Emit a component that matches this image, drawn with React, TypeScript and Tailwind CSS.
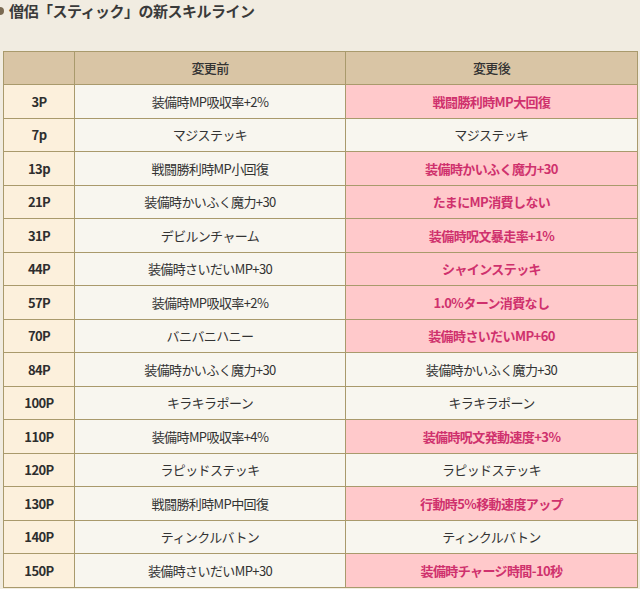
import React from 'react';

interface SkillRow {
    pt: string;
    before: string;
    after: string;
    changed: boolean;
}

const rows: SkillRow[] = [
    { pt: "3P", before: "装備時MP吸収率+2%", after: "戦闘勝利時MP大回復", changed: true },
    { pt: "7p", before: "マジステッキ", after: "マジステッキ", changed: false },
    { pt: "13p", before: "戦闘勝利時MP小回復", after: "装備時かいふく魔力+30", changed: true },
    { pt: "21P", before: "装備時かいふく魔力+30", after: "たまにMP消費しない", changed: true },
    { pt: "31P", before: "デビルンチャーム", after: "装備時呪文暴走率+1%", changed: true },
    { pt: "44P", before: "装備時さいだいMP+30", after: "シャインステッキ", changed: true },
    { pt: "57P", before: "装備時MP吸収率+2%", after: "1.0%ターン消費なし", changed: true },
    { pt: "70P", before: "バニバニハニー", after: "装備時さいだいMP+60", changed: true },
    { pt: "84P", before: "装備時かいふく魔力+30", after: "装備時かいふく魔力+30", changed: false },
    { pt: "100P", before: "キラキラポーン", after: "キラキラポーン", changed: false },
    { pt: "110P", before: "装備時MP吸収率+4%", after: "装備時呪文発動速度+3%", changed: true },
    { pt: "120P", before: "ラピッドステッキ", after: "ラピッドステッキ", changed: false },
    { pt: "130P", before: "戦闘勝利時MP中回復", after: "行動時5%移動速度アップ", changed: true },
    { pt: "140P", before: "ティンクルバトン", after: "ティンクルバトン", changed: false },
    { pt: "150P", before: "装備時さいだいMP+30", after: "装備時チャージ時間-10秒", changed: true },
];

export default function App() {
    return (
        <div className="h-[589px] w-[640px] overflow-hidden bg-[#f1ece1] font-['Noto_Sans_CJK_JP',sans-serif] text-[#333]">
            <div className="relative flex h-[22px] items-center pl-[9px]">
                <span className="absolute left-[-4px] top-[7px] h-[8px] w-[8px] rounded-full bg-[#7a6a52]" />
                <h2 className="text-[15px] font-bold tracking-[-0.5px] text-[#3a3a3a]">
                    僧侶「スティック」の新スキルライン
                </h2>
            </div>
            <div className="pl-[3px] pt-[29px]">
                <table className="w-[634px] table-fixed border-collapse text-[13px] tracking-[-0.6px]">
                    <colgroup>
                        <col className="w-[71px]" />
                        <col className="w-[271px]" />
                        <col className="w-[292px]" />
                    </colgroup>
                    <thead>
                        <tr className="h-[33px] bg-[#d9c5a5]">
                            <th className="border border-[#a99a6c]" />
                            <th className="border border-[#a99a6c] font-medium text-[#333]">変更前</th>
                            <th className="border border-[#a99a6c] font-medium text-[#333]">変更後</th>
                        </tr>
                    </thead>
                    <tbody>
                        {rows.map((row) => (
                            <tr key={row.pt} className="h-[33.5px]">
                                <td className="border border-[#a99a6c] bg-[#fcf0dc] text-center font-bold text-[#2e2e2e]">
                                    {row.pt}
                                </td>
                                <td className="border border-[#a99a6c] bg-[#f8f6ef] text-center">
                                    {row.before}
                                </td>
                                {row.changed ? (
                                    <td className="border border-[#a99a6c] bg-[#ffc9cb] text-center font-bold text-[#cf316d]">
                                        {row.after}
                                    </td>
                                ) : (
                                    <td className="border border-[#a99a6c] bg-[#f8f6ef] text-center">
                                        {row.after}
                                    </td>
                                )}
                            </tr>
                        ))}
                    </tbody>
                </table>
            </div>
        </div>
    );
}
